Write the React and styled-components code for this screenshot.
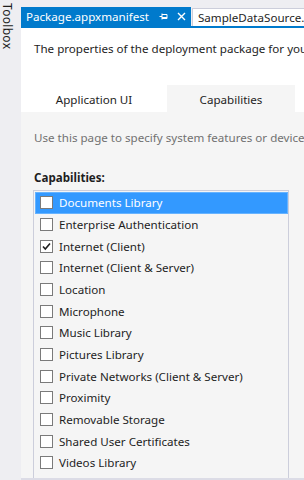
import React from "react";
import styled, { createGlobalStyle } from "styled-components";

const Global = createGlobalStyle`
  html, body { margin: 0; padding: 0; }
  body {
    width: 304px; height: 480px; overflow: hidden;
    background: #eeeef2;
    font-family: "Noto Sans", "Open Sans", sans-serif;
    color: #1e1e1e;
  }
`;

const Frame = styled.div`
  display: flex;
  width: 304px;
  height: 480px;
  overflow: hidden;
`;

const Sidebar = styled.div`
  width: 21px;
  flex: none;
  background: #eeeef2;
  display: flex;
  justify-content: flex-start;
  padding: 3px 0 0 1px;
  box-sizing: border-box;
`;

const SideLabel = styled.div`
  writing-mode: vertical-rl;
  font-size: 12px;
  line-height: 12px;
  letter-spacing: 0.3px;
  color: #1e1e1e;
`;

const Main = styled.div`
  flex: 1;
  min-width: 0;
  display: flex;
  flex-direction: column;
  background: #f5f5f5;
  overflow: hidden;
`;

const TabStrip = styled.div`
  height: 28px;
  flex: none;
  background: #eeeef2;
  border-bottom: 2px solid #007acc;
  box-sizing: border-box;
  display: flex;
  align-items: flex-end;
  padding-top: 7px;
  white-space: nowrap;
`;

const DocTab = styled.div`
  display: flex;
  align-items: center;
  height: ${p => (p.$active ? "19px" : "18px")};
  padding: 0 5px 0 5px;
  box-sizing: border-box;
  font-size: 11.6px;
  background: ${p => (p.$active ? "#007acc" : "#ffffff")};
  color: ${p => (p.$active ? "#ffffff" : "#1e1e1e")};
  border: ${p => (p.$active ? "none" : "1px solid #cccedb")};
  border-bottom: none;
  margin-right: 1px;
  flex: none;
`;

const TabIcons = styled.span`
  display: flex;
  align-items: center;
  gap: 9px;
  margin-left: 10px;
`;

const Header = styled.div`
  background: #ffffff;
  flex: none;
  display: flex;
  flex-direction: column;
`;

const Description = styled.div`
  padding: 13px 0 0 13px;
  height: 57px;
  box-sizing: border-box;
  font-size: 11.6px;
  white-space: nowrap;
`;

const PageTabs = styled.div`
  display: flex;
  height: 27px;
`;

const PageTab = styled.div`
  width: ${p => p.$w}px;
  flex: none;
  display: flex;
  align-items: center;
  justify-content: center;
  padding-top: 1px;
  box-sizing: border-box;
  font-size: 11.6px;
  background: ${p => (p.$selected ? "#f5f5f5" : "#ffffff")};
`;

const Body = styled.div`
  flex: 1;
  min-height: 0;
  padding: 18px 0 0 13px;
  display: flex;
  flex-direction: column;
  overflow: hidden;
`;

const Hint = styled.div`
  font-size: 11.6px;
  color: #717171;
  white-space: nowrap;
`;

const SectionLabel = styled.div`
  margin-top: 25px;
  font-size: 11.6px;
  font-weight: 700;
  color: #1e1e1e;
`;

const ListBox = styled.div`
  margin: 5px 0 0 -1px;
  width: 256px;
  flex: 1;
  min-height: 0;
  background: #f5f5f5;
  border: 1px solid #cccedb;
  border-bottom: none;
  box-sizing: border-box;
  padding: 1px 0 0 1px;
  overflow: hidden;
`;

const Row = styled.div`
  height: 21.67px;
  display: flex;
  align-items: center;
  padding-left: 5px;
  gap: 6px;
  font-size: 11.6px;
  white-space: nowrap;
  background: ${p => (p.$selected ? "#3399ff" : "transparent")};
  color: ${p => (p.$selected ? "#ffffff" : "#1e1e1e")};
  box-shadow: ${p => (p.$selected ? "inset 0 0 0 1px #66b3ff" : "none")};
`;

const Box = styled.span`
  width: 13px;
  height: 13px;
  flex: none;
  box-sizing: border-box;
  background: #ffffff;
  border: 1px solid #7a7a7a;
  display: flex;
  align-items: center;
  justify-content: center;
`;

const BottomEdge = styled.div`
  height: 2px;
  flex: none;
  background: #dcdce6;
`;

const PinIcon = () => (
  <svg width="9" height="9" viewBox="0 0 9 9">
    <path d="M0.5 4.5H3 M3 1.5V7.5 M3 2.5H8V6.5H3 M3 5.5H8" stroke="#fff" strokeWidth="1" fill="none" />
  </svg>
);

const CloseIcon = () => (
  <svg width="9" height="9" viewBox="0 0 9 9">
    <path d="M1 1L8 8M8 1L1 8" stroke="#fff" strokeWidth="1.4" />
  </svg>
);

const Check = () => (
  <svg width="11" height="11" viewBox="0 0 11 11">
    <path d="M2 5.5L4.3 8L9 2.5" stroke="#1e1e1e" strokeWidth="1.6" fill="none" />
  </svg>
);

const capabilities = [
  "Documents Library",
  "Enterprise Authentication",
  "Internet (Client)",
  "Internet (Client & Server)",
  "Location",
  "Microphone",
  "Music Library",
  "Pictures Library",
  "Private Networks (Client & Server)",
  "Proximity",
  "Removable Storage",
  "Shared User Certificates",
  "Videos Library",
  "Webcam",
];

export default function App() {
  return (
    <>
      <Global />
      <Frame>
        <Sidebar>
          <SideLabel>Toolbox</SideLabel>
        </Sidebar>
        <Main>
          <TabStrip>
            <DocTab $active>
              Package.appxmanifest
              <TabIcons>
                <PinIcon />
                <CloseIcon />
              </TabIcons>
            </DocTab>
            <DocTab>SampleDataSource.cs</DocTab>
          </TabStrip>
          <Header>
            <Description>The properties of the deployment package for your app</Description>
            <PageTabs>
              <PageTab $w={146}>Application UI</PageTab>
              <PageTab $w={128} $selected>Capabilities</PageTab>
            </PageTabs>
          </Header>
          <Body>
            <Hint>Use this page to specify system features or devices that your app can use.</Hint>
            <SectionLabel>Capabilities:</SectionLabel>
            <ListBox>
              {capabilities.map((c, i) => (
                <Row key={c} $selected={i === 0}>
                  <Box>{c === "Internet (Client)" && <Check />}</Box>
                  {c}
                </Row>
              ))}
            </ListBox>
          </Body>
          <BottomEdge />
        </Main>
      </Frame>
    </>
  );
}
